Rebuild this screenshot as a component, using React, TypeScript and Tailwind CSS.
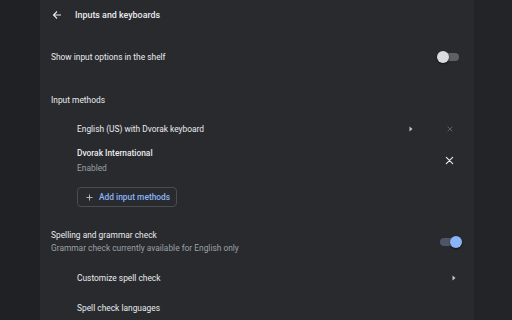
import React from 'react';

function Caret() {
  return (
    <svg width="4" height="6" viewBox="0 0 4 6" className="shrink-0">
      <path d="M0.5 0.5 L3.5 3 L0.5 5.5 Z" fill="#c4c7c5" />
    </svg>
  );
}

function Cross({ size, color }: { size: number; color: string }) {
  return (
    <svg width={size} height={size} viewBox="0 0 10 10" className="shrink-0">
      <path d="M1.5 1.5 L8.5 8.5 M8.5 1.5 L1.5 8.5" stroke={color} strokeWidth="1.3" strokeLinecap="round" />
    </svg>
  );
}

function Toggle({ on }: { on: boolean }) {
  return (
    <div className="relative w-[20px] h-[8px]">
      <div className={on ? 'absolute inset-0 rounded-full bg-[#4d5566]' : 'absolute inset-0 rounded-full bg-[#5f6063]'} />
      <div
        className={
          on
            ? 'absolute top-[-2px] right-[-2px] w-[12px] h-[12px] rounded-full bg-[#8ab4f8] shadow-[0_1px_2px_rgba(0,0,0,0.6)]'
            : 'absolute top-[-2px] left-[-2px] w-[12px] h-[12px] rounded-full bg-[#dadce0] shadow-[0_1px_2px_rgba(0,0,0,0.6)]'
        }
      />
    </div>
  );
}

export default function App() {
  return (
    <div className="w-[512px] h-[320px] overflow-hidden flex bg-[#202124] text-[#e8eaed] font-['Roboto',sans-serif] text-[8.4px] leading-[11px]">
      <div className="w-[40px] shrink-0 bg-[#202124]" />
      <div className="w-[434px] shrink-0 bg-[#292a2d] flex flex-col">
        <div className="h-[30px] shrink-0 flex items-center pl-[12px]">
          <svg width="10" height="10" viewBox="0 0 10 10">
            <path d="M9 5 H1.5 M5 1.5 L1.5 5 L5 8.5" stroke="#e8eaed" strokeWidth="1.1" fill="none" />
          </svg>
          <span className="ml-[13px] text-[8.9px] font-medium">Inputs and keyboards</span>
        </div>

        <div className="h-[54px] shrink-0 flex items-center justify-between pl-[11px] pr-[15px]">
          <span>Show input options in the shelf</span>
          <Toggle on={false} />
        </div>

        <div className="h-[32px] shrink-0 flex items-center pl-[11px]">
          <span>Input methods</span>
        </div>

        <div className="h-[26px] shrink-0 flex items-center pl-[37px] pr-[21px]">
          <span className="flex-1">English (US) with Dvorak keyboard</span>
          <Caret />
          <div className="w-[40px] flex justify-end">
            <Cross size={6} color="#6b6d70" />
          </div>
        </div>

        <div className="h-[37px] shrink-0 flex items-center pl-[37px] pr-[20px]">
          <div className="flex-1 flex flex-col gap-[4px]">
            <span className="font-medium">Dvorak International</span>
            <span className="text-[#9aa0a6]">Enabled</span>
          </div>
          <Cross size={9} color="#e8eaed" />
        </div>

        <div className="h-[36px] shrink-0 flex items-start pl-[37px] pt-[8px]">
          <div className="h-[20px] pl-[8px] pr-[6px] flex items-center gap-[6px] rounded-[4px] border border-[#4a4c50]">
            <svg width="7" height="7" viewBox="0 0 8 8">
              <path d="M4 0.5 V7.5 M0.5 4 H7.5" stroke="#c4c7c5" strokeWidth="1" />
            </svg>
            <span className="text-[#8ab4f8] font-medium">Add input methods</span>
          </div>
        </div>

        <div className="h-[53px] shrink-0 flex items-center justify-between pl-[11px] pr-[14px]">
          <div className="flex flex-col gap-[2px]">
            <span>Spelling and grammar check</span>
            <span className="text-[#9aa0a6]">Grammar check currently available for English only</span>
          </div>
          <Toggle on={true} />
        </div>

        <div className="h-[20px] shrink-0 flex items-center justify-between pl-[37px] pr-[18px]">
          <span>Customize spell check</span>
          <Caret />
        </div>

        <div className="h-[40px] shrink-0 flex items-center pl-[37px]">
          <span>Spell check languages</span>
        </div>
      </div>
      <div className="flex-1 bg-[#232427]" />
    </div>
  );
}
